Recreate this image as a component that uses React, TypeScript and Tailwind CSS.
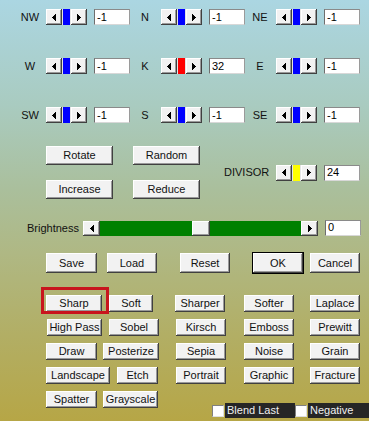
import React from "react";

const bevel =
  "bg-[#f2f2f2] shadow-[inset_-1px_-1px_0_#404040,inset_1px_1px_0_#ffffff,inset_-2px_-2px_0_#9a9a9a]";

function Arrow({ dir }: { dir: "l" | "r" }) {
  return (
    <svg width="4" height="7" viewBox="0 0 4 7" shapeRendering="crispEdges">
      <path d={dir === "l" ? "M4 0 L0 3.5 L4 7Z" : "M0 0 L4 3.5 L0 7Z"} fill="#000" />
    </svg>
  );
}

function SmallScroll({ color }: { color: string }) {
  return (
    <div className="flex h-[16px] w-[41px] bg-[#e4e4e4]">
      <div className={`${bevel} flex h-full w-[16px] items-center justify-center`}>
        <Arrow dir="l" />
      </div>
      <div className="flex w-[9px] items-stretch justify-center py-0">
        <div className={`w-[7px] ${color}`} />
      </div>
      <div className={`${bevel} flex h-full w-[16px] items-center justify-center`}>
        <Arrow dir="r" />
      </div>
    </div>
  );
}

function TextBox({ value, w = "w-[36px]" }: { value: string; w?: string }) {
  return (
    <div
      className={`${w} flex h-[16px] items-center border-t border-l border-t-[#8a8a8a] border-l-[#6e6e6e] border-r border-b border-r-[#9a9a9a] border-b-[#d8d8d8] bg-white pl-[2px] text-[11px] leading-none text-black`}
    >
      {value}
    </div>
  );
}

function Group({ label, value, color }: { label: string; value: string; color: string }) {
  return (
    <div className="flex w-[115px] items-center">
      <div className="w-[28px] text-center text-[11px] leading-none text-[#111]">{label}</div>
      <div className="ml-[2px]">
        <SmallScroll color={color} />
      </div>
      <div className="ml-[7px]">
        <TextBox value={value} />
      </div>
    </div>
  );
}

function Btn({
  children,
  w,
  h = "h-[17px]",
  extra = "",
}: {
  children: React.ReactNode;
  w: string;
  h?: string;
  extra?: string;
}) {
  return (
    <div
      className={`${w} ${h} ${bevel} ${extra} flex shrink-0 items-center justify-center text-[11px] leading-none text-[#111]`}
    >
      {children}
    </div>
  );
}

function CheckItem({ label, w }: { label: string; w: string }) {
  return (
    <div className="flex h-[15px] items-center">
      <div className="h-[12px] w-[12px] border-t border-l border-t-[#808080] border-l-[#808080] border-r border-b border-r-[#e0e0e0] border-b-[#e0e0e0] bg-white" />
      <div
        className={`${w} ml-[1px] flex h-[15px] items-center bg-[#262626] pl-[2px] text-[11px] leading-none text-[#f0f0f0]`}
      >
        {label}
      </div>
    </div>
  );
}

export default function App() {
  return (
    <div
      className="relative h-[421px] w-[369px] overflow-hidden bg-[linear-gradient(180deg,#abd6e2_0%,#a9cbc0_25%,#aabf9c_45%,#afb884_60%,#b2ae64_80%,#b6a646_100%)]"
      style={{ fontFamily: '"Liberation Sans", Arial, sans-serif' }}
    >
      {/* direction rows */}
      <div className="flex flex-col pl-[16px] pt-[9px]">
        <div className="flex">
          <Group label="NW" value="-1" color="bg-[#0000ff]" />
          <Group label="N" value="-1" color="bg-[#0000ff]" />
          <Group label="NE" value="-1" color="bg-[#0000ff]" />
        </div>
        <div className="mt-[33px] flex">
          <Group label="W" value="-1" color="bg-[#0000ff]" />
          <Group label="K" value="32" color="bg-[#ff0000]" />
          <Group label="E" value="-1" color="bg-[#0000ff]" />
        </div>
        <div className="mt-[33px] flex">
          <Group label="SW" value="-1" color="bg-[#0000ff]" />
          <Group label="S" value="-1" color="bg-[#0000ff]" />
          <Group label="SE" value="-1" color="bg-[#0000ff]" />
        </div>
      </div>

      {/* rotate block */}
      <div className="mt-[23px] flex items-center pl-[46px]">
        <div className="grid grid-cols-[67px_67px] gap-x-[20px] gap-y-[15px]">
          <Btn w="w-[67px]" h="h-[19px]">Rotate</Btn>
          <Btn w="w-[67px]" h="h-[19px]">Random</Btn>
          <Btn w="w-[67px]" h="h-[19px]">Increase</Btn>
          <Btn w="w-[67px]" h="h-[19px]">Reduce</Btn>
        </div>
        <div className="ml-[24px] flex items-center">
          <div className="w-[52px] text-[11px] leading-none text-[#111]">DIVISOR</div>
          <SmallScroll color="bg-[#ffff00]" />
          <div className="ml-[7px]">
            <TextBox value="24" />
          </div>
        </div>
      </div>

      {/* brightness */}
      <div className="mt-[20px] flex h-[17px] items-center pl-[27px]">
        <div className="w-[56px] pt-[2px] text-[11px] leading-none text-[#111]">Brightness</div>
        <div className="mt-[2px] flex h-[15px] w-[235px]">
          <div className={`${bevel} flex w-[17px] items-center justify-center`}>
            <Arrow dir="l" />
          </div>
          <div className="w-[92px] bg-[#008000]" />
          <div className={`${bevel} w-[18px]`} />
          <div className="flex-1 bg-[#008000]" />
          <div className={`${bevel} flex w-[17px] items-center justify-center`}>
            <Arrow dir="r" />
          </div>
        </div>
        <div className="ml-[7px]">
          <TextBox value="0" />
        </div>
      </div>

      {/* save row */}
      <div className="mt-[17px] flex pl-[46px]">
        <Btn w="w-[51px]" h="h-[20px]">Save</Btn>
        <Btn w="w-[50px]" h="h-[20px]" extra="ml-[10px]">Load</Btn>
        <Btn w="w-[50px]" h="h-[20px]" extra="ml-[23px]">Reset</Btn>
        <Btn w="w-[50px]" h="h-[20px]" extra="ml-[23px] outline outline-1 outline-black">OK</Btn>
        <Btn w="w-[50px]" h="h-[20px]" extra="ml-[7px]">Cancel</Btn>
      </div>

      {/* filter grid */}
      <div className="mt-[22px] flex flex-col gap-[7px] pl-[46px]">
        <div className="flex h-[17px]">
          <div className="flex w-[130px]">
            <Btn w="w-[56px]">Sharp</Btn>
            <Btn w="w-[44px]" extra="ml-[7px]">Soft</Btn>
          </div>
          <Btn w="w-[50px]" extra="-ml-[1px]">Sharper</Btn>
          <Btn w="w-[50px]" extra="ml-[19px]">Softer</Btn>
          <Btn w="w-[50px]" extra="ml-[16px]">Laplace</Btn>
        </div>
        <div className="flex h-[17px]">
          <div className="flex w-[130px]">
            <Btn w="w-[55px]" extra="ml-[1px]">High Pass</Btn>
            <Btn w="w-[50px]" extra="ml-[7px]">Sobel</Btn>
          </div>
          <Btn w="w-[50px]">Kirsch</Btn>
          <Btn w="w-[50px]" extra="ml-[18px]">Emboss</Btn>
          <Btn w="w-[50px]" extra="ml-[16px]">Prewitt</Btn>
        </div>
        <div className="flex h-[17px]">
          <div className="flex w-[130px]">
            <Btn w="w-[51px]">Draw</Btn>
            <Btn w="w-[56px]" extra="ml-[6px]">Posterize</Btn>
          </div>
          <Btn w="w-[50px]">Sepia</Btn>
          <Btn w="w-[50px]" extra="ml-[18px]">Noise</Btn>
          <Btn w="w-[50px]" extra="ml-[16px]">Grain</Btn>
        </div>
        <div className="flex h-[17px]">
          <div className="flex w-[130px]">
            <Btn w="w-[64px]">Landscape</Btn>
            <Btn w="w-[41px]" extra="ml-[7px]">Etch</Btn>
          </div>
          <Btn w="w-[50px]">Portrait</Btn>
          <Btn w="w-[50px]" extra="ml-[18px]">Graphic</Btn>
          <Btn w="w-[50px]" extra="ml-[16px]">Fracture</Btn>
        </div>
        <div className="flex h-[17px] items-start">
          <Btn w="w-[51px]">Spatter</Btn>
          <Btn w="w-[55px]" extra="ml-[6px]">Grayscale</Btn>
          <div className="ml-[54px] mt-[12px] flex">
            <CheckItem label="Blend Last" w="w-[70px]" />
            <CheckItem label="Negative" w="w-[62px]" />
          </div>
        </div>
      </div>

      {/* red highlight */}
      <div className="absolute left-[41px] top-[287px] h-[27px] w-[68px] border-[3px] border-[#c8151d]" />
    </div>
  );
}
